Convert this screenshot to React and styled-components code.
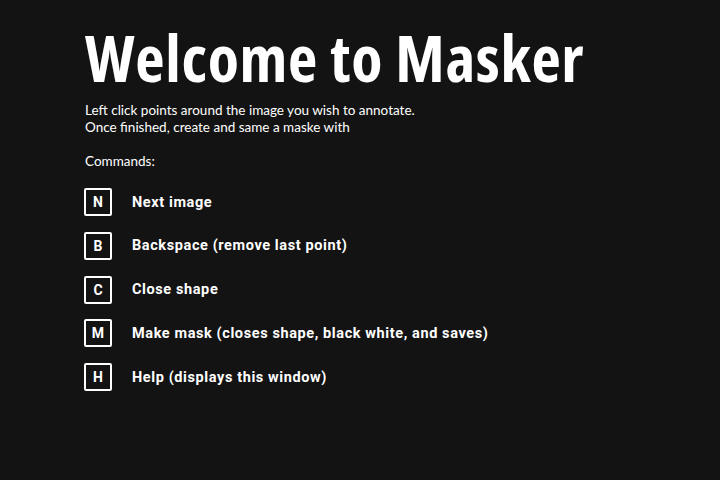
import React from 'react';
import styled, { createGlobalStyle } from 'styled-components';

const GlobalStyle = createGlobalStyle`
  html, body {
    margin: 0;
    padding: 0;
    background: #131313;
  }
`;

const Page = styled.div`
  width: 720px;
  height: 480px;
  background: #131313;
  color: #ffffff;
  padding: 22px 0 0 85px;
  box-sizing: border-box;
  display: flex;
  flex-direction: column;
`;

const Title = styled.h1`
  margin: 0;
  font-family: "Open Sans", sans-serif;
  font-stretch: 77%;
  font-weight: bold;
  font-size: 64px;
  line-height: 72px;
  letter-spacing: 0.7px;
`;

const Intro = styled.p`
  margin: 8px 0 0;
  font-family: Lato, "Open Sans", sans-serif;
  font-size: 13.5px;
  line-height: 17px;
`;

const Heading = styled.p`
  margin: 17px 0 0;
  font-family: Lato, "Open Sans", sans-serif;
  font-size: 13.5px;
  line-height: 17px;
`;

const CommandList = styled.ul`
  list-style: none;
  margin: 18px 0 0 -1px;
  padding: 0;
  display: flex;
  flex-direction: column;
  gap: 15.8px;
`;

const CommandRow = styled.li`
  display: flex;
  align-items: center;
  gap: 20px;
`;

const Key = styled.span`
  width: 28px;
  height: 28px;
  box-sizing: border-box;
  border: 2px solid #ffffff;
  border-radius: 2px;
  display: flex;
  align-items: center;
  justify-content: center;
  font-family: Roboto, sans-serif;
  font-weight: bold;
  font-size: 14px;
`;

const Label = styled.span`
  font-family: Roboto, sans-serif;
  font-weight: bold;
  font-size: 14.5px;
  letter-spacing: 0.6px;
`;

const commands = [
  { key: 'N', label: 'Next image' },
  { key: 'B', label: 'Backspace (remove last point)' },
  { key: 'C', label: 'Close shape' },
  { key: 'M', label: 'Make mask (closes shape, black white, and saves)' },
  { key: 'H', label: 'Help (displays this window)' },
];

export default function App() {
  return (
    <>
      <GlobalStyle />
      <Page>
        <Title>Welcome to Masker</Title>
        <Intro>
          Left click points around the image you wish to annotate.
          <br />
          Once finished, create and same a maske with
        </Intro>
        <Heading>Commands:</Heading>
        <CommandList>
          {commands.map((c) => (
            <CommandRow key={c.key}>
              <Key>{c.key}</Key>
              <Label>{c.label}</Label>
            </CommandRow>
          ))}
        </CommandList>
      </Page>
    </>
  );
}
